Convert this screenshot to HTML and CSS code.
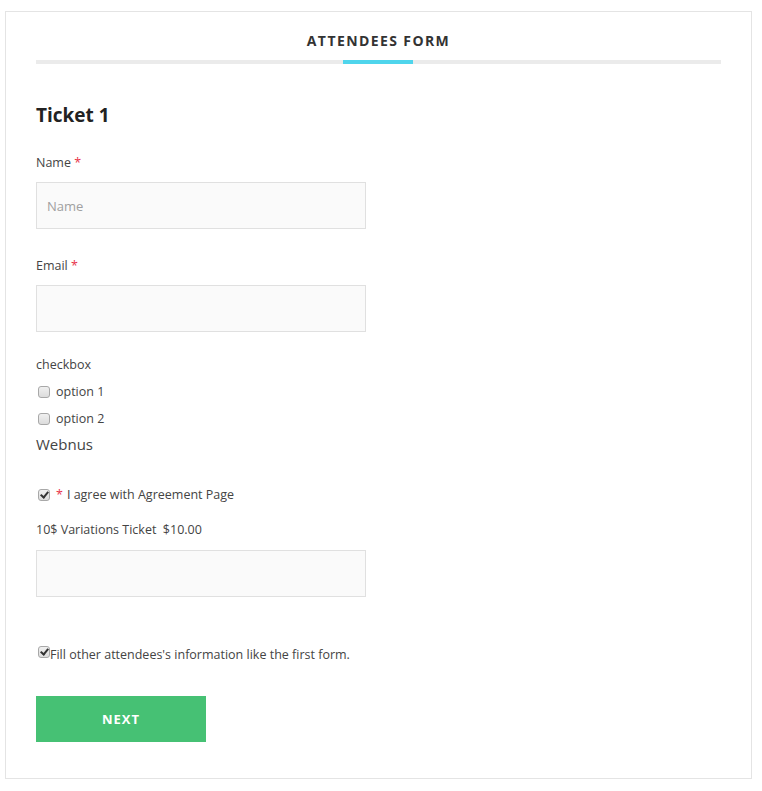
FILE: index.html
```html
<!DOCTYPE html>
<html>
<head>
<meta charset="utf-8">
<link rel="stylesheet" href="styles.css">
</head>
<body>
<div class="box">
  <div class="head">
    <h2 class="title">ATTENDEES FORM</h2>
    <div class="progress"><span class="progress-fill"></span></div>
  </div>
  <h3 class="ticket">Ticket 1</h3>
  <div class="field">
    <label class="lbl">Name <span class="req">*</span></label>
    <input class="inp" type="text" placeholder="Name">
  </div>
  <div class="field field-email">
    <label class="lbl">Email <span class="req">*</span></label>
    <input class="inp" type="text">
  </div>
  <div class="group">
    <div class="lbl">checkbox</div>
    <label class="opt"><input type="checkbox" class="cb"> option 1</label>
    <label class="opt"><input type="checkbox" class="cb"> option 2</label>
  </div>
  <div class="webnus">Webnus</div>
  <label class="agree"><input type="checkbox" class="cb" checked> <span class="req">*</span> I agree with Agreement Page</label>
  <div class="lbl price">10$ Variations Ticket&nbsp; $10.00</div>
  <input class="inp" type="text">
  <label class="fill"><input type="checkbox" class="cb cb-tight" checked>Fill other attendees's information like the first form.</label>
  <button class="next">NEXT</button>
</div>
</body>
</html>
```

FILE: styles.css
```css
html, body { margin: 0; padding: 0; background: #fff; }
body { font-family: "Open Sans", "Liberation Sans", sans-serif; color: #444; }
.box {
  margin: 11px 0 0 5px;
  height: 766px;
  border: 1px solid #e4e4e4;
  padding: 0 30px;
  box-sizing: content-box;
  width: 685px;
}
.head { padding-top: 20px; }
.title {
  margin: 0;
  text-align: center;
  font-size: 14px;
  font-weight: 700;
  color: #333;
  line-height: 18px;
  letter-spacing: 1.4px;
}
.progress {
  margin-top: 10px;
  height: 4px;
  background: #ebebeb;
  display: flex;
  justify-content: center;
}
.progress-fill {
  display: block;
  width: 70px;
  height: 4px;
  background: #4fd5ec;
  margin-right: 2px;
}
.ticket {
  margin: 38px 0 0;
  font-size: 19px;
  font-weight: 700;
  color: #222;
  line-height: 26px;
}
.field { margin-top: 26px; }
.field-email { margin-top: 28px; }
.lbl { display: block; font-size: 12.5px; line-height: 18px; color: #444; }
.req { color: #e8334a; }
.inp {
  display: block;
  margin-top: 10px;
  width: 330px;
  height: 47px;
  box-sizing: border-box;
  border: 1px solid #e0e0e0;
  background: #fafafa;
  padding: 0 10px;
  font-family: inherit;
  font-size: 13px;
  color: #444;
  outline: none;
}
.inp::placeholder { color: #a0a0a0; }
.group { margin-top: 24px; }
.opt { display: flex; align-items: center; font-size: 12.5px; line-height: 18px; margin-top: 9px; }
.cb {
  appearance: none;
  -webkit-appearance: none;
  position: relative;
  width: 12px;
  height: 12px;
  margin: 0 6px 0 2px;
  border: 1px solid #a8a8a8;
  border-radius: 3px;
  background: linear-gradient(#f0f0f0, #dcdcdc);
  box-sizing: border-box;
  flex: none;
}
.cb:checked::after {
  content: "";
  position: absolute;
  left: 3px;
  top: 0px;
  width: 3px;
  height: 6px;
  border: solid #333;
  border-width: 0 2px 2px 0;
  transform: rotate(40deg);
}
.webnus { font-size: 15px; line-height: 20px; margin-top: 6px; color: #444; }
.agree { display: flex; align-items: center; font-size: 12.5px; line-height: 18px; margin-top: 32px; }
.agree .req { margin-right: 4px; }
.price { margin-top: 17px; }
.price + .inp { margin-top: 11px; }
.fill { display: flex; align-items: center; font-size: 12.5px; line-height: 18px; margin-top: 49px; }
.cb-tight { margin: 0 0 0 2px; top: -3px; }
.next {
  display: block;
  margin-top: 32px;
  width: 170px;
  height: 46px;
  border: 0;
  background: #46c174;
  color: #fff;
  font-family: "Open Sans", sans-serif;
  font-weight: 700;
  font-size: 13px;
  letter-spacing: 1px;
  cursor: pointer;
}
```
